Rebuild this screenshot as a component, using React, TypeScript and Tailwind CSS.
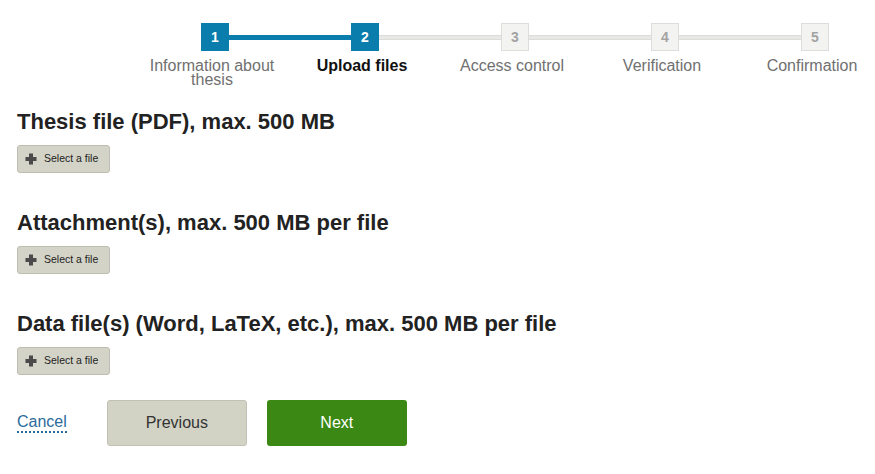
import React from "react";

const steps = [
  { n: 1, label: "Information about thesis", state: "done" },
  { n: 2, label: "Upload files", state: "current" },
  { n: 3, label: "Access control", state: "todo" },
  { n: 4, label: "Verification", state: "todo" },
  { n: 5, label: "Confirmation", state: "todo" },
];

function Seg({ kind }: { kind: "none" | "blue" | "gray" }) {
  if (kind === "none") return <div className="flex-1" />;
  if (kind === "blue") return <div className="flex-1 h-[5px] bg-[#0b7dad]" />;
  return <div className="flex-1 h-[5px] bg-[#e8e8e6] border-y border-[#dcdcda]" />;
}

function Stepper() {
  return (
    <div className="flex ml-[140px] pt-[23px]">
      {steps.map((s, i) => {
        const left: "none" | "blue" | "gray" = i === 0 ? "none" : i <= 1 ? "blue" : "gray";
        const right: "none" | "blue" | "gray" = i === steps.length - 1 ? "none" : i < 1 ? "blue" : "gray";
        const box =
          s.state === "todo"
            ? "bg-[#f3f3f1] border border-[#dddddb] text-[#a3a3a3]"
            : "bg-[#0b7dad] text-white";
        return (
          <div key={s.n} className="w-[150px] shrink-0 flex flex-col items-center">
            <div className="flex items-center w-full">
              <Seg kind={left} />
              <div className={`w-[28px] h-[28px] flex items-center justify-center text-[14px] font-bold ${box}`}>
                {s.n}
              </div>
              <Seg kind={right} />
            </div>
            <div
              className={`mt-[8px] mr-[6px] text-[16px] leading-[14px] text-center px-[8px] ${
                s.state === "current" ? "font-bold text-[#111]" : "text-[#707070]"
              }`}
            >
              {s.label}
            </div>
          </div>
        );
      })}
    </div>
  );
}

function PlusIcon() {
  return (
    <svg width="12" height="12" viewBox="0 0 12 12" className="shrink-0">
      <rect x="4" y="0.5" width="4" height="11" fill="#4a4a4a" />
      <rect x="0.5" y="4" width="11" height="4" fill="#4a4a4a" />
    </svg>
  );
}

function Section({ title }: { title: string }) {
  return (
    <div className="flex flex-col items-start">
      <h2 className="text-[22px] leading-[24px] font-bold text-[#222]">{title}</h2>
      <button className="mt-[11px] h-[28px] w-[93px] flex items-center gap-[7px] pl-[7px] bg-[#d3d3c7] border border-[#bdbdb1] rounded-[3px] text-[10.5px] text-[#222]">
        <PlusIcon />
        <span>Select a file</span>
      </button>
    </div>
  );
}

export default function App() {
  return (
    <div
      className="w-[875px] h-[474px] overflow-hidden bg-white"
      style={{ fontFamily: '"Liberation Sans", Arial, sans-serif' }}
    >
      <Stepper />
      <div className="pl-[17px] mt-[23px] flex flex-col gap-[38px]">
        <Section title="Thesis file (PDF), max. 500 MB" />
        <Section title="Attachment(s), max. 500 MB per file" />
        <Section title="Data file(s) (Word, LaTeX, etc.), max. 500 MB per file" />
      </div>
      <div className="pl-[17px] mt-[25px] flex items-center">
        <a className="text-[16px] leading-[18px] text-[#2b6b9b] border-b-2 border-dotted border-[#2b6b9b] cursor-pointer">
          Cancel
        </a>
        <button className="ml-[40px] w-[140px] h-[46px] bg-[#d2d2c5] border border-[#c0c0b4] rounded-[3px] text-[16px] text-[#333]">
          Previous
        </button>
        <button className="ml-[20px] w-[140px] h-[46px] bg-[#3b8814] rounded-[3px] text-[16px] text-white">
          Next
        </button>
      </div>
    </div>
  );
}
